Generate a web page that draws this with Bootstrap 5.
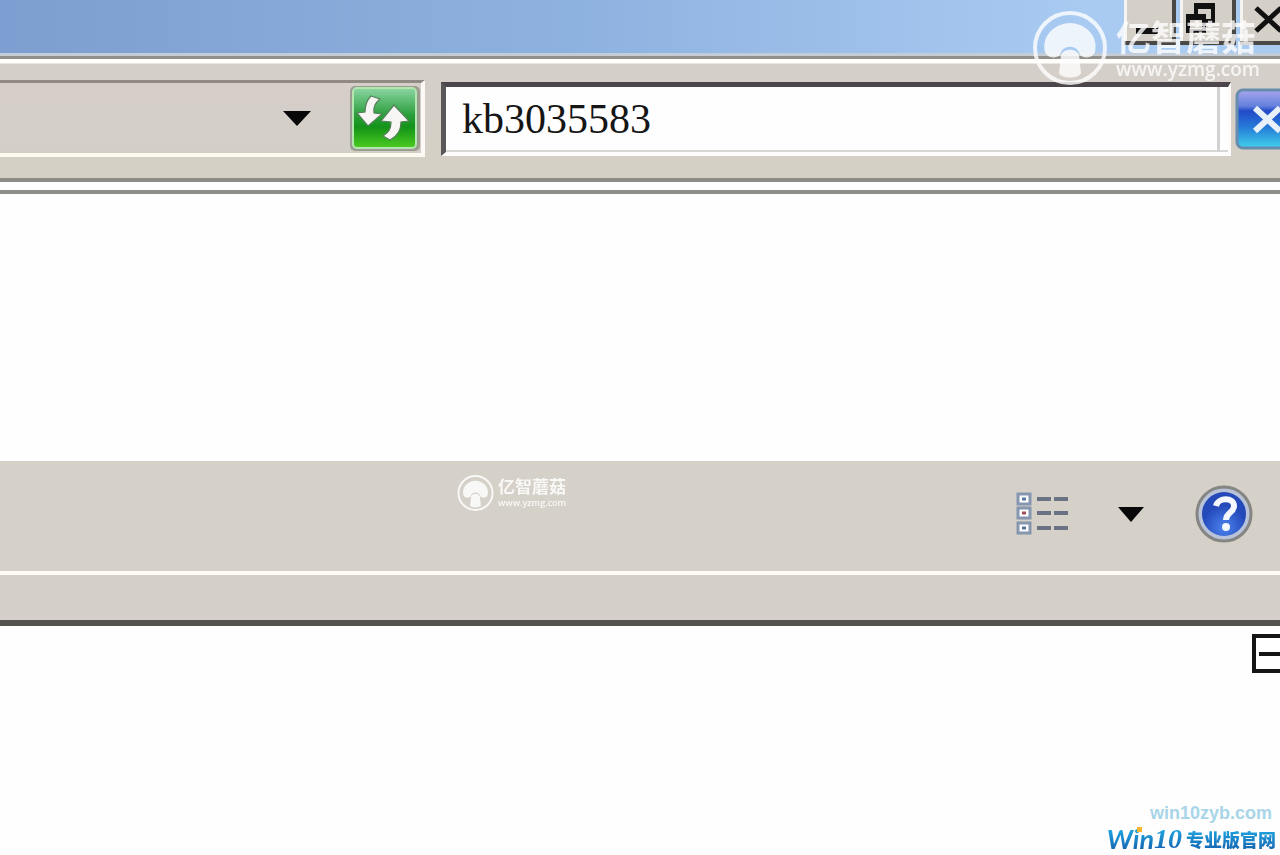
<!DOCTYPE html>
<html lang="zh-CN">
<head>
<meta charset="utf-8">
<meta name="viewport" content="width=device-width, initial-scale=1">
<title>kb3035583</title>
<link href="https://cdn.jsdelivr.net/npm/bootstrap@5.3.0/dist/css/bootstrap.min.css" rel="stylesheet">
<script src="https://cdn.jsdelivr.net/npm/bootstrap@5.3.0/dist/js/bootstrap.bundle.min.js" defer></script>
<style>
body{font-family:"Liberation Sans","Noto Sans CJK SC",sans-serif;background:#fefefe;}
button{border:0;padding:0;background:none;display:block;flex:none;}
svg{display:block;}
.titlebar{height:53px;background:linear-gradient(90deg,#7c9ed0,#8eb2e0 45%,#a9cbf2 85%);}
.winctl{height:45px;background:#d4cfc7;border:solid #4b4945;border-width:0 4px 4px 0;box-shadow:inset 3px 0 #f6f4f0;overflow:hidden;}
.w-min{width:52px;}
.w-restore{width:56px;}
.w-close{width:40px;border-right:0;}
.tools{height:126px;margin-top:3px;border-top:3px solid #93908c;border-bottom:4px solid #8c8d87;background:linear-gradient(#fffefa 4px,#d5cfc9 5px,#d5d0c5);box-shadow:0 -3px #c4ccd5;}
.inset-bar{height:77px;border-top:3px solid #918a82;border-bottom:4px solid #fcf9f1;border-right:4px solid #fcf9f6;background:linear-gradient(#d6cec9,#d3cfc7);width:425px;}
.search{height:74px;border:solid #fdfcfa;border-width:5px 3px 4px 5px;border-top-color:#4c454a;border-left-color:#5a5758;background:#fefefe;box-shadow:inset 0 -2px #d9d7d3;}
.search input{font:42px/50px "Liberation Serif",serif;color:#151515;background:none;outline:0;min-width:0;}
.scroll-edge{width:3px;background:#d2d0d2;}
.strip{height:12px;border-bottom:4px solid #8d8e89;background:#fff;}
.pane{height:267px;}
.bar-icons{height:110px;padding-bottom:4px;background:#d5d0c8;}
.bar-sub{height:55px;border-top:4px solid #fffaf4;border-bottom:6px solid #55534e;background:#d4cfc8;}
.expander{width:28px;height:39px;border:4px solid #151515;border-right:0;background:#fff;}
.expander span{height:4px;background:#151515;margin-left:3px;}
.wm{position:absolute;color:#fff;pointer-events:none;}
.wm-big{right:20px;top:9px;opacity:.8;}
.wm-small{left:457px;top:13px;opacity:.85;}
.wm b,.wm span{display:block;white-space:nowrap;}
.wm-big b{font-size:35px;line-height:40px;}
.wm-big span{font:600 19px/20px "Open Sans",sans-serif;}
.wm-small b{font-size:17px;line-height:20px;}
.wm-small span{font:600 9px/10px "Open Sans",sans-serif;}
.site{color:#a8d5e8;font:bold 18px/20px "Liberation Sans",sans-serif;}
.brand{color:#1b83c9;font:900 18px/32px "Noto Sans CJK SC",sans-serif;}
.brand em,.brand i,.brand-cn{background:linear-gradient(#1fa0dc 25%,#1668b5 80%);-webkit-background-clip:text;background-clip:text;color:transparent;}
.brand em{font:italic bold 27px/32px Lato,sans-serif;}
.brand i{font:italic bold 28px/32px "Liberation Serif",serif;}
.brand-dot{position:absolute;left:30px;top:4px;width:5px;height:5px;background:#f5b52e;}
</style>
</head>
<body class="d-flex flex-column min-vh-100 overflow-x-hidden position-relative">
<header class="titlebar d-flex justify-content-end gap-1">
  <button class="winctl w-min" aria-label="Minimize"><svg width="48" height="41"><path d="M12 31h22" stroke="#111" stroke-width="6"/></svg></button>
  <button class="winctl w-restore" aria-label="Restore"><svg width="52" height="41" fill="none" stroke="#111" stroke-width="4"><path d="M16 14V6h17v15h-7"/><path d="M14 6h21" stroke-width="6"/><path d="M8 16h16v15H8z"/><path d="M6 17h20" stroke-width="6"/></svg></button>
  <button class="winctl w-close" aria-label="Close"><svg width="42" height="41"><path d="M16 8l25 23M41 8L16 31" stroke="#111" stroke-width="5"/></svg></button>
</header>
<div class="tools d-flex align-items-center flex-shrink-0">
  <div class="inset-bar d-flex align-items-center justify-content-end flex-shrink-0">
    <button class="me-4" aria-label="Address history"><svg width="50" height="40"><path d="M8 13h28L22 28z" fill="#080808"/></svg></button>
    <button aria-label="Refresh"><svg width="72" height="68">
      <defs><linearGradient id="gr" x2="0" y2="1"><stop stop-color="#8bd6a4"/><stop offset=".45" stop-color="#2b9e3b"/><stop offset=".65" stop-color="#139318"/><stop offset="1" stop-color="#4ccc20"/></linearGradient></defs>
      <rect x="1" y="2" width="70" height="65" rx="5" fill="#9b9d91"/><rect x="4" y="4" width="63" height="60" rx="4" fill="url(#gr)" stroke="#b4e6af" stroke-width="2"/>
      <path d="M22 12l9 3c-5 4-7 8-6 14l8 1-14 12L8 29l8-1c0-7 2-12 6-16zM45 21l15 16-8 1c0 9-5 15-11 18l-7-4c6-4 8-7 8-14l-10-1z" fill="#f8f5f5" stroke="#55805b" stroke-width="1.2"/></svg></button>
  </div>
  <div class="search d-flex flex-grow-1 ms-3">
    <input class="border-0 flex-grow-1 px-3 py-0" type="text" aria-label="Search" value="kb3035583">
    <span class="scroll-edge me-2"></span>
  </div>
  <button class="ms-1" aria-label="Clear search"><svg width="45" height="62">
    <defs><linearGradient id="bl" x2="0" y2="1"><stop stop-color="#a9a6ed"/><stop offset=".28" stop-color="#6380dd"/><stop offset=".36" stop-color="#234ac9"/><stop offset=".62" stop-color="#2477d6"/><stop offset="1" stop-color="#40d1ed"/></linearGradient></defs>
    <rect x="2" y="2" width="60" height="58" rx="6" fill="url(#bl)" stroke="#678cae" stroke-width="3"/><path d="M20 20l25 23M45 20L20 43" stroke="#e8f0fa" stroke-width="6"/></svg></button>
</div>
<div class="strip flex-shrink-0"></div>
<main class="flex-grow-1 d-flex flex-column">
  <div class="pane"></div>
  <div class="bar-icons d-flex align-items-center justify-content-end position-relative">
    <button aria-label="View"><svg width="56" height="48"><g fill="#fff" stroke="#8496b0" stroke-width="3"><path d="M6 4h12v10H6zM6 18h12v10H6zM6 33h12v10H6z"/></g><path d="M25 9h14m3 0h14M25 23h14m3 0h14M25 38h14m3 0h14" stroke="#6b7283" stroke-width="4"/><path d="M10 9h4M10 38h4" stroke="#5678a0" stroke-width="3"/><path d="M10 23h4" stroke="#a34d60" stroke-width="3"/></svg></button>
    <button class="mx-5" aria-label="View options"><svg width="30" height="18"><path d="M2 2h26L15 17z" fill="#080808"/></svg></button>
    <button class="me-4" aria-label="Help"><svg width="62" height="60">
      <defs><radialGradient id="hp" cy=".8"><stop stop-color="#4b83ef"/><stop offset="1" stop-color="#2449b9"/></radialGradient></defs>
      <circle cx="30" cy="30" r="27" fill="#b8c2d8" stroke="#858583" stroke-width="3"/><circle cx="30" cy="30" r="22" fill="url(#hp)"/><path d="M22 22c2-9 18-9 18 0 0 7-8 6-8 14" fill="none" stroke="#f4f7fd" stroke-width="6"/><circle cx="32" cy="43" r="4" fill="#f4f7fd"/></svg></button>
    <div class="wm wm-small d-flex align-items-center gap-1"><svg width="37" height="37" viewBox="0 0 76 76"><use href="#mush"/></svg><div><b>亿智蘑菇</b><span>www.yzmg.com</span></div></div>
  </div>
  <div class="bar-sub"></div>
  <div class="d-flex justify-content-end pt-2"><button class="expander" aria-label="Collapse"><span class="d-block"></span></button></div>
</main>
<footer class="d-flex flex-column align-items-end px-1">
  <a class="site text-decoration-none me-1" href="#">win10zyb.com</a>
  <a class="brand d-flex align-items-center gap-1 text-decoration-none position-relative" href="#"><span class="d-flex"><em>Win</em><i>10</i></span><span class="brand-cn">专业版官网</span><span class="brand-dot"></span></a>
</footer>
<div class="wm wm-big d-flex align-items-center gap-2">
  <svg width="76" height="80" viewBox="0 0 76 80"><g id="mush" fill="#fff"><circle cx="38" cy="39" r="35" fill="none" stroke="#fff" stroke-width="4"/><path d="M13 43C9 25 25 14 38 14s29 11 25 29c-2 6-11 7-15 3-2-11-18-11-20 0-4 4-13 3-15-3z"/><path d="M29 46c3-7 15-7 18 0l2 18c-2 6-20 6-22 0z"/></g></svg>
  <div><b>亿智蘑菇</b><span>www.yzmg.com</span></div>
</div>
</body>
</html>
